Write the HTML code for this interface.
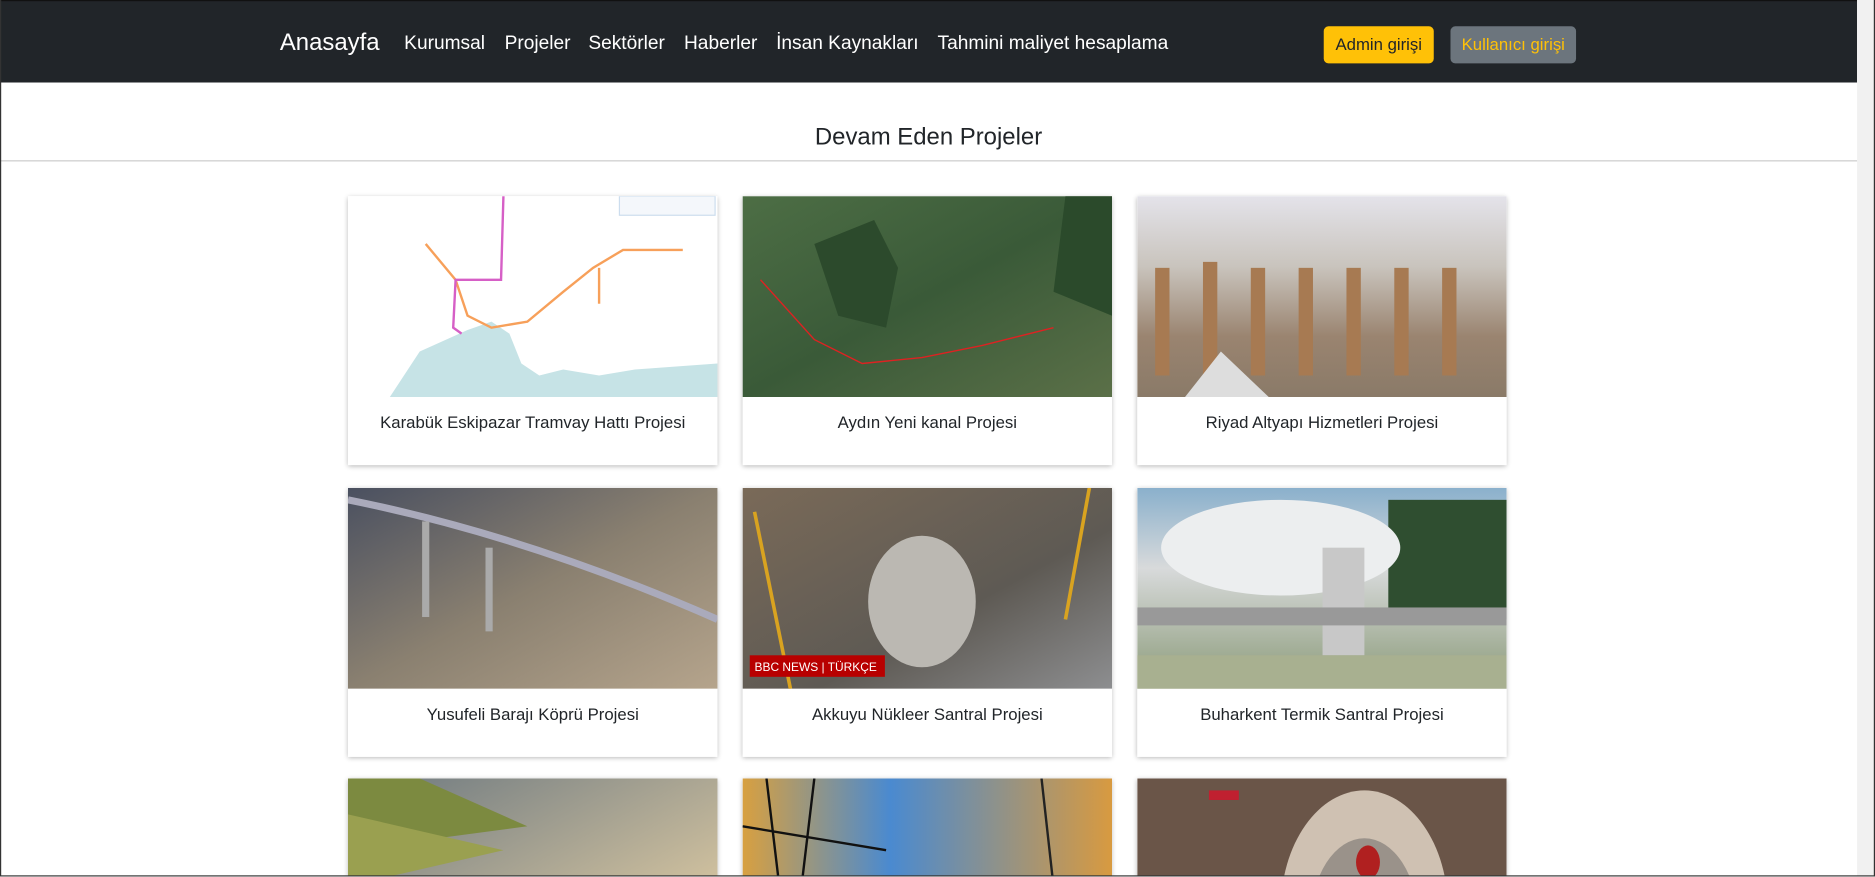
<!DOCTYPE html>
<html><head><meta charset="utf-8"><style>
html,body{margin:0;padding:0;width:1875px;height:876px;overflow:hidden;background:#fff}
#w{position:absolute;left:0;top:0;width:1568px;height:733px;overflow:hidden;transform:scale(1.19579);transform-origin:0 0;font-family:"Liberation Sans",Arial,sans-serif;color:#212529}
.nav{position:absolute;left:0;top:0;width:1553px;height:69px;background:#212529;border-top:1px solid #111;box-sizing:border-box}
.brand{position:absolute;left:234px;top:24px;font-size:20px;color:#fff}
.link{position:absolute;top:27px;font-size:16px;color:#fff}
.btn{position:absolute;top:21px;height:31px;border-radius:4px;font-size:14px;line-height:31px;text-align:center}
h1{position:absolute;left:0;width:1553px;top:104px;margin:0;font-size:20px;font-weight:normal;text-align:center;color:#212529}
.hr{position:absolute;left:0;top:134px;width:1553px;height:1px;background:#ccc}
.card{position:absolute;width:309px;height:225px;background:#fff;box-shadow:0 1px 4px rgba(0,0,0,.3);overflow:hidden}
.img{position:absolute;left:0;top:0;width:309px;height:168px}
.t{position:absolute;left:0;top:181px;width:309px;text-align:center;font-size:14px;color:#212529}
.sb{position:absolute;left:1553px;top:0;width:15px;height:733px;background:#f1f1f1}
.thumb{position:absolute;left:1556px;top:16px;width:9px;height:340px;background:#c1c1c1}
.frame{position:absolute;left:0;top:0;width:1568px;height:733px;box-sizing:border-box;border:1px solid #333;border-top:none;pointer-events:none}
</style></head><body><div id="w">
<div class="nav">
<div class="brand">Anasayfa</div>
<div class="link" style="left:338px">Kurumsal</div>
<div class="link" style="left:422px">Projeler</div>
<div class="link" style="left:492px">Sektörler</div>
<div class="link" style="left:572px">Haberler</div>
<div class="link" style="left:649px">İnsan Kaynakları</div>
<div class="link" style="left:784px">Tahmini maliyet hesaplama</div>
<div class="btn" style="left:1107px;width:92px;background:#ffc107;color:#212529">Admin girişi</div>
<div class="btn" style="left:1213px;width:105px;background:#6c757d;color:#ffc107">Kullanıcı girişi</div>
</div>
<h1>Devam Eden Projeler</h1>
<div class="hr"></div>

<div class="card" style="left:291px;top:164px"><svg class="img" viewBox="0 0 309 168"><rect width="309" height="168" fill="#fff"/><path d="M35 168 L60 130 L100 112 L120 105 L135 115 L145 140 L160 150 L180 145 L210 150 L240 145 L309 140 L309 168Z" fill="#c6e3e6"/><path d="M65 40 L90 70 L100 100 L120 110 L150 105 L180 80 L205 60 L230 45 L280 45" stroke="#f7a05a" stroke-width="2" fill="none"/><path d="M210 60 L210 90" stroke="#f7a05a" stroke-width="2"/><path d="M130 0 L128 70 L90 70 L88 110 L95 115" stroke="#d65fc6" stroke-width="2" fill="none"/><rect x="227" y="0" width="80" height="16" fill="#f4f7fb" stroke="#cde"/></svg><div class="t">Karabük Eskipazar Tramvay Hattı Projesi</div></div>
<div class="card" style="left:621px;top:164px"><svg class="img" viewBox="0 0 309 168"><defs><linearGradient id="g2" x1="0" y1="0" x2="1" y2="1"><stop offset="0" stop-color="#4d6e45"/><stop offset=".5" stop-color="#3a5a38"/><stop offset="1" stop-color="#5b7048"/></linearGradient></defs><rect width="309" height="168" fill="url(#g2)"/><path d="M60 40 L110 20 L130 60 L120 110 L80 100Z" fill="#2c4a2c"/><path d="M270 0 L309 0 L309 100 L260 80Z" fill="#2b4a2b"/><path d="M15 70 L60 120 L100 140 L150 135 L200 125 L260 110" stroke="#d22" stroke-width="1.2" fill="none"/></svg><div class="t">Aydın Yeni kanal Projesi</div></div>
<div class="card" style="left:951px;top:164px"><svg class="img" viewBox="0 0 309 168"><defs><linearGradient id="g3" x1="0" y1="0" x2="0" y2="1"><stop offset="0" stop-color="#e4e3ea"/><stop offset=".35" stop-color="#c9c4bd"/><stop offset=".7" stop-color="#9a8470"/><stop offset="1" stop-color="#8a7a68"/></linearGradient></defs><rect width="309" height="168" fill="url(#g3)"/><g fill="#a77a52"><rect x="15" y="60" width="12" height="90"/><rect x="55" y="55" width="12" height="95"/><rect x="95" y="60" width="12" height="90"/><rect x="135" y="60" width="12" height="90"/><rect x="175" y="60" width="12" height="90"/><rect x="215" y="60" width="12" height="90"/><rect x="255" y="60" width="12" height="90"/></g><path d="M40 168 L70 130 L110 168Z" fill="#ddd"/></svg><div class="t">Riyad Altyapı Hizmetleri Projesi</div></div>

<div class="card" style="left:291px;top:408px"><svg class="img" viewBox="0 0 309 168"><defs><linearGradient id="g4" x1="0" y1="0" x2="1" y2="1"><stop offset="0" stop-color="#4a5060"/><stop offset=".5" stop-color="#8a8070"/><stop offset="1" stop-color="#b5a48c"/></linearGradient></defs><rect width="309" height="168" fill="url(#g4)"/><path d="M0 10 Q150 40 309 110" stroke="#aab" stroke-width="6" fill="none"/><rect x="62" y="28" width="6" height="80" fill="#aaa"/><rect x="115" y="50" width="6" height="70" fill="#aaa"/></svg><div class="t">Yusufeli Barajı Köprü Projesi</div></div>
<div class="card" style="left:621px;top:408px"><svg class="img" viewBox="0 0 309 168"><defs><linearGradient id="g5" x1="0" y1="0" x2="1" y2="1"><stop offset="0" stop-color="#7a6a58"/><stop offset=".6" stop-color="#5e5a54"/><stop offset="1" stop-color="#8d8e90"/></linearGradient></defs><rect width="309" height="168" fill="url(#g5)"/><ellipse cx="150" cy="95" rx="45" ry="55" fill="#bbb8b2"/><path d="M290 0 L270 110" stroke="#d9a320" stroke-width="3"/><path d="M10 20 L40 168" stroke="#d9a320" stroke-width="3"/><rect x="6" y="140" width="113" height="18" fill="#b80000"/><text x="10" y="153" font-size="10" fill="#fff" font-family="Liberation Sans">BBC NEWS | TÜRKÇE</text></svg><div class="t">Akkuyu Nükleer Santral Projesi</div></div>
<div class="card" style="left:951px;top:408px"><svg class="img" viewBox="0 0 309 168"><defs><linearGradient id="g6" x1="0" y1="0" x2="0" y2="1"><stop offset="0" stop-color="#8ab0cc"/><stop offset=".4" stop-color="#d8dadb"/><stop offset="1" stop-color="#8a9a78"/></linearGradient></defs><rect width="309" height="168" fill="url(#g6)"/><rect x="210" y="10" width="99" height="100" fill="#2f4e30"/><ellipse cx="120" cy="50" rx="100" ry="40" fill="#eceeef"/><rect x="155" y="50" width="35" height="90" fill="#c8c8c8"/><rect x="0" y="100" width="309" height="15" fill="#999"/><rect x="0" y="140" width="309" height="28" fill="#a8b090"/></svg><div class="t">Buharkent Termik Santral Projesi</div></div>

<div class="card" style="left:291px;top:651px"><svg class="img" viewBox="0 0 309 168"><defs><linearGradient id="g7" x1="0" y1="0" x2="1" y2="1"><stop offset="0" stop-color="#6c7880"/><stop offset="1" stop-color="#f0d8a8"/></linearGradient></defs><rect width="309" height="168" fill="url(#g7)"/><path d="M0 0 L60 0 L150 40 L0 60Z" fill="#7c8a40"/><path d="M0 30 L130 60 L0 90Z" fill="#9aa050"/></svg></div>
<div class="card" style="left:621px;top:651px"><svg class="img" viewBox="0 0 309 168"><defs><linearGradient id="g8" x1="0" y1="0" x2="1" y2="0"><stop offset="0" stop-color="#d8a040"/><stop offset=".4" stop-color="#4a8ad0"/><stop offset="1" stop-color="#d89a40"/></linearGradient></defs><rect width="309" height="168" fill="url(#g8)"/><path d="M20 0 L40 168 M60 0 L40 168 M0 40 L120 60" stroke="#111" stroke-width="2"/><path d="M250 0 L260 90 M260 90 L300 100" stroke="#222" stroke-width="2"/></svg></div>
<div class="card" style="left:951px;top:651px"><svg class="img" viewBox="0 0 309 168"><rect width="309" height="168" fill="#6a5548"/><ellipse cx="190" cy="110" rx="70" ry="100" fill="#cfc1b2"/><ellipse cx="190" cy="120" rx="45" ry="70" fill="#9a928a"/><ellipse cx="193" cy="70" rx="10" ry="14" fill="#b02020"/><rect x="60" y="10" width="25" height="8" fill="#c02030"/></svg></div>

<div class="sb"><div class="thumb"></div></div>
<div class="frame"></div>
</div></body></html>
